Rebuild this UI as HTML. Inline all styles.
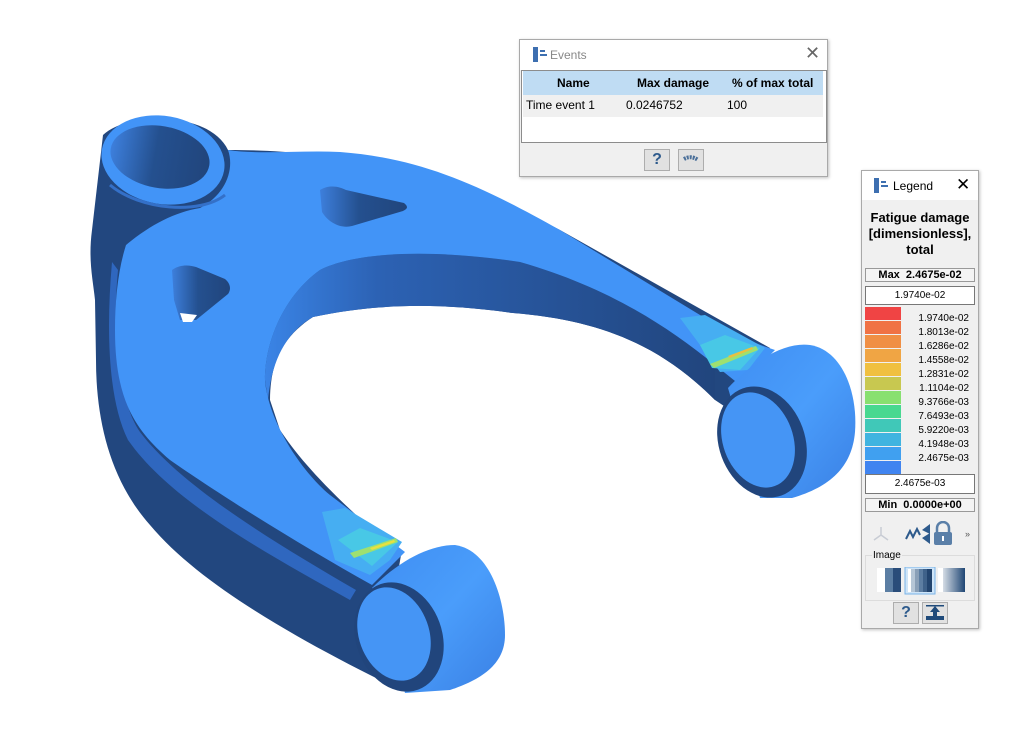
<!DOCTYPE html>
<html><head><meta charset="utf-8"><style>
body{margin:0;width:1018px;height:736px;background:#fff;position:relative;overflow:hidden;font-family:"Liberation Sans",Arial,sans-serif;}
.abs{position:absolute;}
.ev{left:519px;top:39px;width:307px;height:136px;border:1px solid #a9a9a9;background:#f0f0f0;box-shadow:1px 1px 3px rgba(0,0,0,.25);}
.lg{left:861px;top:170px;width:116px;height:457px;border:1px solid #a9a9a9;background:#f0f0f0;box-shadow:1px 1px 3px rgba(0,0,0,.25);}
.btn{position:absolute;width:24px;height:20px;border:1px solid #adadad;background:#e1e1e1;}
.lab{position:absolute;right:9px;font-size:10px;color:#000;}
.sw{position:absolute;left:3px;width:36px;height:13px;}
</style></head><body>

<svg class="abs" style="left:0;top:0" width="1018" height="736" viewBox="0 0 1018 736">
<defs>
<linearGradient id="wall" x1="0" x2="1" y1="0" y2="0"><stop offset="0" stop-color="#3a84e6"/><stop offset=".25" stop-color="#2c62b4"/><stop offset="1" stop-color="#21457d"/></linearGradient>
<linearGradient id="hole" x1="0" x2="1"><stop offset="0" stop-color="#3d7fdc"/><stop offset=".45" stop-color="#24508f"/><stop offset="1" stop-color="#21457c"/></linearGradient>
<linearGradient id="cyl" x1="0" x2="1" y1="0" y2="1"><stop offset="0" stop-color="#3f8ef2"/><stop offset=".5" stop-color="#4a9dfb"/><stop offset="1" stop-color="#3a80e4"/></linearGradient>
</defs>
<!-- dark silhouette -->
<path fill="#22477f" d="M103,135 C130,110 210,112 228,150 C300,150 420,158 560,230 L770,348 L745,420 L715,400 C660,345 600,320 513,313 C440,303 380,303 313,317 C285,335 270,360 270,400 L280,430 C300,460 330,494 401,555 L380,680 C300,640 200,585 150,525 C110,480 96,420 96,360 L95,300 C93,280 88,260 92,230 Z"/>
<!-- inner wall -->
<path fill="url(#wall)" d="M265,380 C265,340 285,295 320,270 C360,250 440,250 520,262 C600,285 660,320 715,365 L715,400 C660,345 600,320 513,313 C440,303 380,303 313,317 C290,330 272,355 268,400 Z"/>
<!-- left outer side lighter edge -->
<path fill="#2f67bf" d="M112,262 C106,330 108,400 128,440 C170,500 260,550 350,600 L356,590 C270,540 180,485 140,432 C118,400 112,330 118,270 Z"/>
<!-- top face -->
<path fill="#4294f7" d="M228,150 C260,155 300,150 340,152 C420,158 480,185 560,230 L700,315 C730,332 750,342 775,350 L740,385 L715,365 C660,320 600,285 520,262 C440,250 360,250 320,270 C285,295 265,340 265,380 C268,420 300,470 330,495 L405,552 L372,585 C300,545 220,495 170,460 C135,430 115,400 115,330 C115,300 118,270 126,245 C150,225 175,212 200,208 C225,195 235,170 228,150 Z"/>
<!-- boss -->
<ellipse cx="163" cy="160" rx="62" ry="44" transform="rotate(10 163 160)" fill="#4294f7"/>
<path fill="none" stroke="#3470c8" stroke-width="3" d="M110,185 C140,210 200,215 225,195"/>
<ellipse cx="160" cy="157" rx="50" ry="31" transform="rotate(10 160 157)" fill="url(#hole)"/>
<!-- triangular holes -->
<path fill="url(#hole)" d="M320,190 C330,184 340,187 346,190 L404,203 C409,207 407,209 403,211 L352,226 C340,229 328,222 322,212 Z"/>
<path fill="url(#hole)" d="M172,270 C180,264 190,265 196,267 L225,279 C231,284 231,290 228,294 L196,320 L180,320 L174,300 Z"/>
<path fill="#fff" d="M180,313 L197,315 L192,322 L183,322 Z"/>
<!-- hot spots -->
<path fill="#46aef2" d="M322,512 L345,508 L402,542 L390,560 L370,575 L335,560 Z"/>
<path fill="#48c8e6" d="M338,540 L360,528 L398,542 L372,566 Z"/>
<path fill="#9ee070" d="M350,553 L396,538 L398,542 L354,558 Z"/>
<path fill="#e8e040" d="M370,548 L394,540 L395,542 L372,550 Z"/>
<path fill="#46aef2" d="M680,318 L705,315 L765,348 L748,370 L720,372 Z"/>
<path fill="#48c8e6" d="M700,345 L725,335 L760,348 L740,370 L712,368 Z"/>
<path fill="#9ee070" d="M710,364 L756,346 L758,350 L714,368 Z"/>
<path fill="#e8c040" d="M728,356 L752,347 L753,349 L730,358 Z"/>
<!-- right lug -->
<path fill="url(#cyl)" d="M728,388 C758,356 788,342 810,345 C842,350 858,392 855,432 C852,467 830,487 792,498 L760,498 Z"/>
<ellipse cx="762" cy="442" rx="43" ry="57" transform="rotate(-20 762 442)" fill="#21457c"/>
<ellipse cx="758" cy="440" rx="35" ry="49" transform="rotate(-20 758 440)" fill="#4595f5"/>
<!-- left lug -->
<path fill="url(#cyl)" d="M372,588 C400,560 430,545 455,545 C490,550 505,600 505,635 C505,665 480,680 450,690 L405,693 Z"/>
<ellipse cx="399" cy="637" rx="43" ry="56" transform="rotate(-20 399 637)" fill="#21457c"/>
<ellipse cx="394" cy="634" rx="35" ry="48" transform="rotate(-20 394 634)" fill="#4595f5"/>
</svg>

<!-- Events -->
<div class="abs ev">
  <div style="position:absolute;left:0;top:0;width:307px;height:30px;background:#fff;"></div>
  <svg class="abs" style="left:12px;top:7px" width="18" height="16"><rect x="1" y="0" width="5" height="15" fill="#3d6fb0"/><rect x="8" y="3" width="5" height="2" fill="#3d6fb0"/><rect x="8" y="7" width="7" height="2" fill="#3d6fb0"/></svg>
  <div class="abs" style="left:30px;top:8px;font-size:12px;color:#888;">Events</div>
  <div class="abs" style="left:285px;top:3px;font-size:18px;color:#666;">✕</div>
  <div class="abs" style="left:1px;top:30px;width:304px;height:71px;background:#fff;border:1px solid #8c8c8c;">
    <div class="abs" style="left:1px;top:0px;width:300px;height:24px;background:#bfdcf3;font-size:12px;font-weight:bold;">
      <span class="abs" style="left:34px;top:5px">Name</span>
      <span class="abs" style="left:114px;top:5px">Max damage</span>
      <span class="abs" style="left:209px;top:5px">% of max total</span>
    </div>
    <div class="abs" style="left:1px;top:24px;width:300px;height:22px;background:#f0f0f0;font-size:12px;">
      <span class="abs" style="left:3px;top:3px">Time event 1</span>
      <span class="abs" style="left:103px;top:3px">0.0246752</span>
      <span class="abs" style="left:204px;top:3px">100</span>
    </div>
  </div>
  <div class="btn" style="left:124px;top:109px;font-weight:bold;color:#2d5a8c;font-size:16px;text-align:center;line-height:20px;">?</div>
  <div class="btn" style="left:158px;top:109px;"><svg width="24" height="20"><path d="M5,9 Q12,5 19,10" stroke="#4a6f99" stroke-width="4" fill="none" stroke-dasharray="2 1"/></svg></div>
</div>

<!-- Legend -->
<div class="abs lg">
  <div style="position:absolute;left:0;top:0;width:116px;height:29px;background:#fff;"></div>
  <svg class="abs" style="left:11px;top:7px" width="18" height="16"><rect x="1" y="0" width="5" height="15" fill="#3d6fb0"/><rect x="8" y="3" width="5" height="2" fill="#3d6fb0"/><rect x="8" y="7" width="7" height="2" fill="#3d6fb0"/></svg>
  <div class="abs" style="left:31px;top:8px;font-size:12px;">Legend</div>
  <div class="abs" style="left:94px;top:4px;font-size:17px;">✕</div>
  <div class="abs" style="left:0;top:39px;width:116px;text-align:center;font-size:13px;font-weight:bold;line-height:16px;">Fatigue damage<br>[dimensionless],<br>total</div>
  <div class="abs" style="left:3px;top:97px;width:108px;height:12px;border:1px solid #999;background:#f4f4f4;font-size:11px;font-weight:bold;text-align:center;line-height:12px;">Max&nbsp; 2.4675e-02</div>
  <div class="abs" style="left:3px;top:115px;width:108px;height:17px;border:1px solid #777;background:#fff;font-size:10px;text-align:center;line-height:17px;">1.9740e-02</div>
  <div class="sw" style="top:136px;background:#f04444"></div>
  <div class="sw" style="top:150px;background:#f07244"></div>
  <div class="sw" style="top:164px;background:#f08f44"></div>
  <div class="sw" style="top:178px;background:#f0a544"></div>
  <div class="sw" style="top:192px;background:#f0c040"></div>
  <div class="sw" style="top:206px;background:#c8c850"></div>
  <div class="sw" style="top:220px;background:#88e070"></div>
  <div class="sw" style="top:234px;background:#48d890"></div>
  <div class="sw" style="top:248px;background:#40c8b8"></div>
  <div class="sw" style="top:262px;background:#40b4e0"></div>
  <div class="sw" style="top:276px;background:#40a0f0"></div>
  <div class="sw" style="top:290px;background:#4084f0"></div>
  <div class="lab" style="top:142px">1.9740e-02</div>
  <div class="lab" style="top:156px">1.8013e-02</div>
  <div class="lab" style="top:170px">1.6286e-02</div>
  <div class="lab" style="top:184px">1.4558e-02</div>
  <div class="lab" style="top:198px">1.2831e-02</div>
  <div class="lab" style="top:212px">1.1104e-02</div>
  <div class="lab" style="top:226px">9.3766e-03</div>
  <div class="lab" style="top:240px">7.6493e-03</div>
  <div class="lab" style="top:254px">5.9220e-03</div>
  <div class="lab" style="top:268px">4.1948e-03</div>
  <div class="lab" style="top:282px">2.4675e-03</div>
  <div class="abs" style="left:3px;top:303px;width:108px;height:18px;border:1px solid #777;background:#fff;font-size:10px;text-align:center;line-height:18px;">2.4675e-03</div>
  <div class="abs" style="left:3px;top:327px;width:108px;height:12px;border:1px solid #999;background:#f4f4f4;font-size:11px;font-weight:bold;text-align:center;line-height:12px;">Min&nbsp; 0.0000e+00</div>
  <svg class="abs" style="left:8px;top:350px" width="100" height="26">
    <g stroke="#c8ccd4" stroke-width="1.5" fill="none"><path d="M11,6 V14 L4,19 M11,14 L18,19"/></g>
    <path d="M36,18 L40,10 L43,16 L47,8 L50,14" stroke="#2d5a8c" stroke-width="2" fill="none"/>
    <path d="M52,9 L60,3 L60,13 Z M52,17 L60,12 L60,23 Z" fill="#2d5a8c"/>
    <rect x="64" y="11" width="18" height="13" rx="2" fill="#5a7fa8"/>
    <path d="M67,11 V7 A6,6 0 0 1 79,7 V11" stroke="#5a7fa8" stroke-width="2.5" fill="none"/>
    <rect x="72" y="15" width="2" height="5" fill="#fff"/>
    <text x="95" y="16" font-size="9" fill="#555" font-family="Liberation Sans">»</text>
  </svg>
  <div class="abs" style="left:3px;top:384px;width:108px;height:44px;border:1px solid #dcdcdc;"></div>
  <div class="abs" style="left:10px;top:379px;font-size:10px;background:#f0f0f0;padding:0 1px;">Image</div>
  <svg class="abs" style="left:14px;top:396px" width="90" height="28">
    <rect x="1" y="1" width="8" height="24" fill="#fff"/><rect x="9" y="1" width="8" height="24" fill="#5b7ea3"/><rect x="17" y="1" width="8" height="24" fill="#2a4d7a"/>
    <rect x="29" y="0" width="30" height="27" fill="#cfe5f8" stroke="#7ab4e8"/>
    <rect x="32" y="2" width="3" height="23" fill="#fff"/><rect x="35" y="2" width="4" height="23" fill="#b6c6d6"/><rect x="39" y="2" width="4" height="23" fill="#8aa0b8"/><rect x="43" y="2" width="4" height="23" fill="#5d7ea2"/><rect x="47" y="2" width="4" height="23" fill="#3f628a"/><rect x="51" y="2" width="5" height="23" fill="#23456f"/>
    <defs><linearGradient id="g3"><stop offset="0" stop-color="#fff"/><stop offset="1" stop-color="#1f4674"/></linearGradient></defs>
    <rect x="62" y="1" width="27" height="24" fill="url(#g3)"/><rect x="62" y="1" width="5" height="24" fill="#fff"/>
  </svg>
  <div class="btn" style="left:31px;top:431px;font-weight:bold;color:#2d5a8c;font-size:16px;text-align:center;line-height:20px;">?</div>
  <div class="btn" style="left:60px;top:431px;"><svg width="24" height="20"><rect x="3" y="13" width="18" height="4" fill="#1f4a7a"/><path d="M12,3 L7,9 H10 V13 H14 V9 H17 Z" fill="#1f4a7a"/><rect x="3" y="2" width="18" height="1.5" fill="#1f4a7a"/></svg></div>
</div>
</body></html>
